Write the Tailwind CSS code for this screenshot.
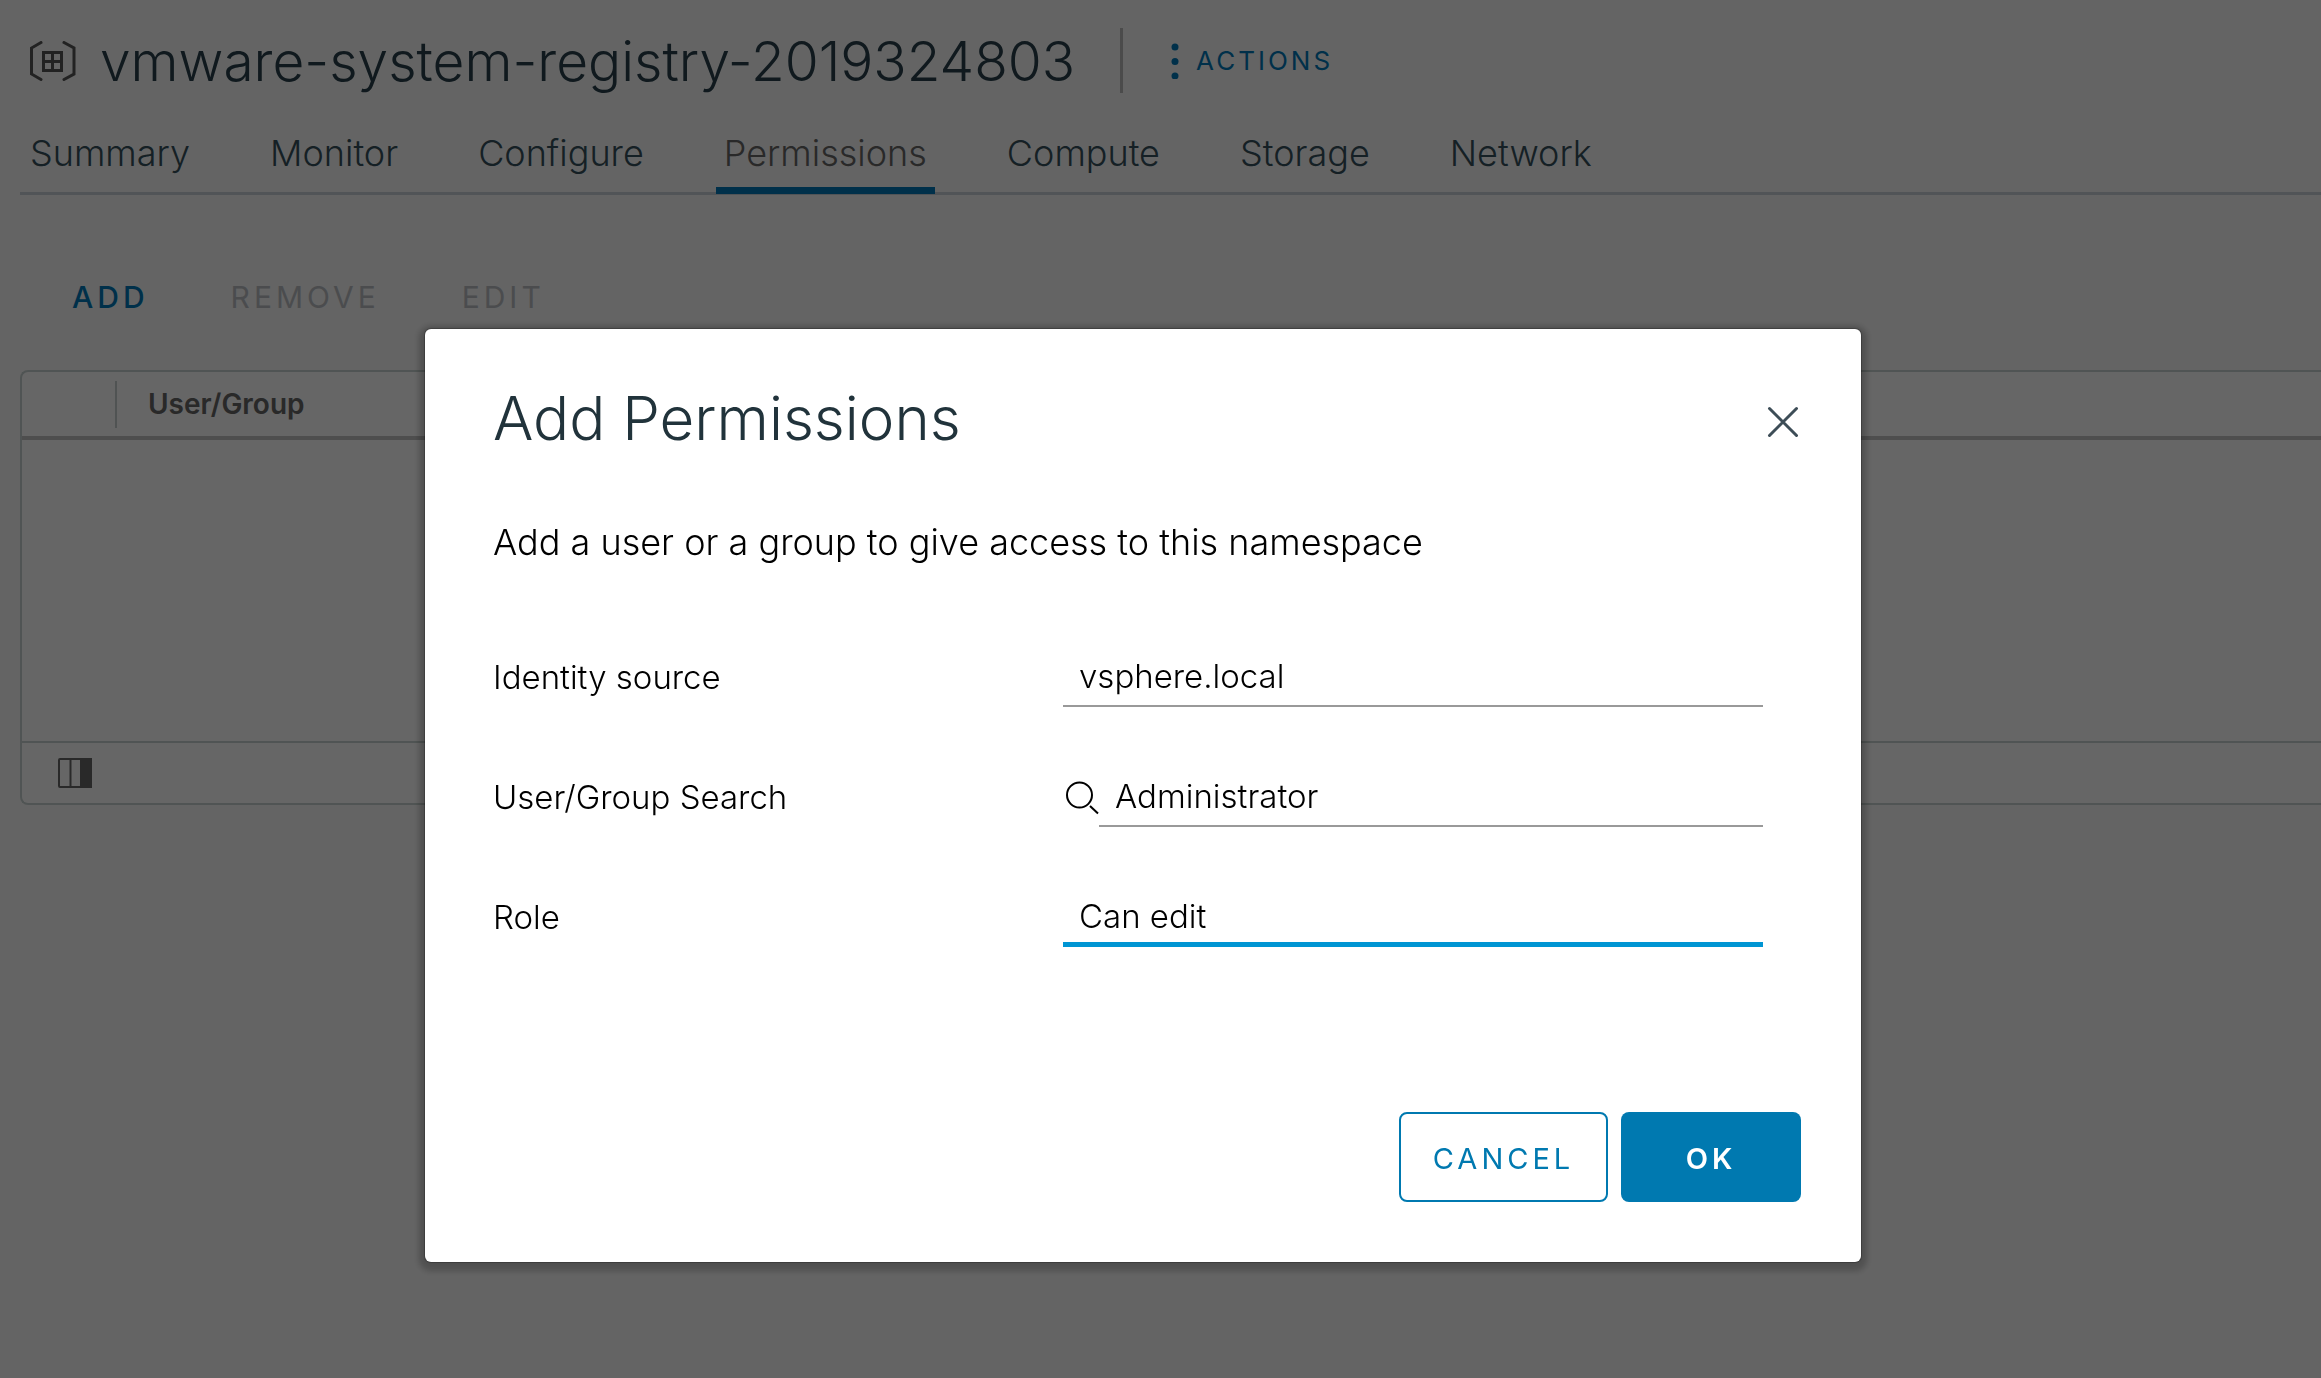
<!DOCTYPE html>
<html lang="en">
<head>
<meta charset="utf-8">
<title>vmware-system-registry-2019324803</title>
<script src="https://cdn.jsdelivr.net/npm/@tailwindcss/browser@4"></script>
</head>
<body class="min-h-screen overflow-x-hidden bg-[#fafafa] font-['Inter',sans-serif] font-light text-black">
<div class="pl-5">
  <header class="flex h-[93px] items-center pt-7">
    <svg class="ml-2 h-10 w-12 shrink-0" viewBox="0 0 48 40" fill="none" stroke="#565656" stroke-width="3" aria-hidden="true">
      <path d="M13 1.500 3.500 7v26l9.500 5.500M36 1.500 46 7v26L36 38.500" stroke-linecap="round"/>
      <path d="M15.500 11.500h18v18h-18zM24.500 11.500v18M15.500 20.500h18"/>
    </svg>
    <h1 class="ml-6 text-[55px] leading-[64px] font-light whitespace-nowrap text-[#29404b]">vmware-system-registry-2019324803</h1>
    <div class="ml-[45px] h-[65px] w-[3px] bg-[#bbb]"></div>
    <button type="button" class="ml-[48px] flex items-center gap-[17px] text-[26px] leading-8 font-normal tracking-[3px] text-[#0079b8]">
      <svg class="h-9 w-2" viewBox="0 0 8 36" fill="currentColor" aria-hidden="true"><circle cx="4" cy="4" r="3.500"/><circle cx="4" cy="18.500" r="3.500"/><circle cx="4" cy="33" r="3.500"/></svg>
      ACTIONS
    </button>
  </header>

  <nav class="mt-10 flex gap-16 border-b-3 border-[#cbd2d9] pl-[2px] text-4xl leading-10 text-[#36505c]">
    <a href="#" class="px-2 pb-[14px] leading-10">Summary</a>
    <a href="#" class="px-2 pb-[14px] leading-10">Monitor</a>
    <a href="#" class="px-2 pb-[14px] leading-10">Configure</a>
    <a href="#" class="-mb-[2px] border-b-[7px] border-[#0079b8] px-2 pb-[14px] leading-10 text-[#666]" aria-current="page">Permissions</a>
    <a href="#" class="px-2 pb-[14px] leading-10">Compute</a>
    <a href="#" class="px-2 pb-[14px] leading-10">Storage</a>
    <a href="#" class="px-2 pb-[14px] leading-10">Network</a>
  </nav>

  <div class="mt-[82px] flex gap-[82px] pl-[52px] text-[30px] leading-10 font-normal text-[#bbbfc4]">
    <button type="button" class="font-medium tracking-[4px] text-[#0079b8]">ADD</button>
    <button type="button" class="tracking-[4px]" disabled>REMOVE</button>
    <button type="button" class="tracking-[4px]" disabled>EDIT</button>
  </div>

  <section class="mt-[53px] rounded-l-lg border-2 border-r-0 border-[#c8d3d1] bg-white">
    <table class="w-full border-collapse text-left">
      <thead>
        <tr class="border-b-4 border-[#c4c4c4]">
          <th class="h-[66px] w-[95px] p-0"><div class="h-[47px] border-r-2 border-[#c8d0d0]"></div></th>
          <th class="pl-[31px] text-[28px] leading-8 font-semibold text-[#666]">User/Group</th>
        </tr>
      </thead>
      <tbody><tr><td colspan="2" class="h-[303px]"></td></tr></tbody>
    </table>
    <footer class="flex h-[62px] items-center border-t-2 border-[#c8d3d1] pl-9">
      <button type="button" aria-label="Manage columns">
        <svg class="h-[30px] w-[34px]" viewBox="0 0 34 30" fill="none" stroke="#666" stroke-width="2" aria-hidden="true">
          <rect x="1" y="1" width="32" height="28" rx="1"/><path d="M12.500 1v28"/><path d="M23 1h10v28H23z" fill="#666"/>
        </svg>
      </button>
    </footer>
  </section>
</div>

<div class="fixed inset-0 flex items-start justify-center bg-black/60 pt-[329px] pr-[35px]">
  <div role="dialog" aria-modal="true" aria-labelledby="dialog-title" class="w-[1436px] rounded-md bg-white pt-[51px] pr-[60px] pb-[60px] pl-[68px] shadow-[0_0_1px_1px_rgba(0,0,0,0.25),0_3px_6px_6px_rgba(0,0,0,0.22)]">
    <div class="flex items-center justify-between">
      <h2 id="dialog-title" class="text-[60px] leading-[76px] font-light text-[#21333b]">Add Permissions</h2>
      <button type="button" aria-label="Close" class="mt-2">
        <svg class="mr-[2px] h-8 w-8" viewBox="0 0 32 32" fill="none" stroke="#3d4d57" stroke-width="3" stroke-linecap="round" aria-hidden="true"><path d="m2.500 2.500 27 27M29.500 2.500l-27 27"/></svg>
      </button>
    </div>
    <p class="mt-[62px] text-4xl leading-[48px]">Add a user or a group to give access to this namespace</p>
    <form class="mt-[81px] text-[33px] leading-10">
      <div class="grid grid-cols-[570px_700px] gap-y-[60px]">
        <label for="source" class="flex items-center">Identity source</label>
        <select id="source" class="h-[60px] appearance-none border-b-2 border-[#999] px-4 outline-none"><option>vsphere.local</option></select>
        <label for="search" class="flex items-center">User/Group Search</label>
        <div class="flex h-[60px] items-center">
          <svg class="h-9 w-9 shrink-0" viewBox="0 0 36 36" fill="none" stroke="#000" stroke-width="2" aria-hidden="true"><circle cx="16.500" cy="16" r="12.500"/><path d="m27 27 8 7.500"/></svg>
          <input id="search" type="text" value="Administrator" class="h-full min-w-0 flex-1 border-b-2 border-[#999] px-4 outline-none">
        </div>
        <label for="role" class="flex items-center">Role</label>
        <select id="role" class="h-[60px] appearance-none border-b-[5px] border-[#0095d3] px-4 pt-[3px] outline-none"><option>Can edit</option></select>
      </div>
      <div class="mt-[165px] flex justify-end gap-[13px] text-[29px]">
        <button type="button" class="h-[90px] w-[209px] rounded-lg border-2 border-[#0079b0] pt-[3px] font-normal tracking-[4px] text-[#0079b0]">CANCEL</button>
        <button type="submit" class="h-[90px] w-[180px] rounded-lg bg-[#0079b0] pt-[3px] font-semibold tracking-[4px] text-white">OK</button>
      </div>
    </form>
  </div>
</div>
</body>
</html>
